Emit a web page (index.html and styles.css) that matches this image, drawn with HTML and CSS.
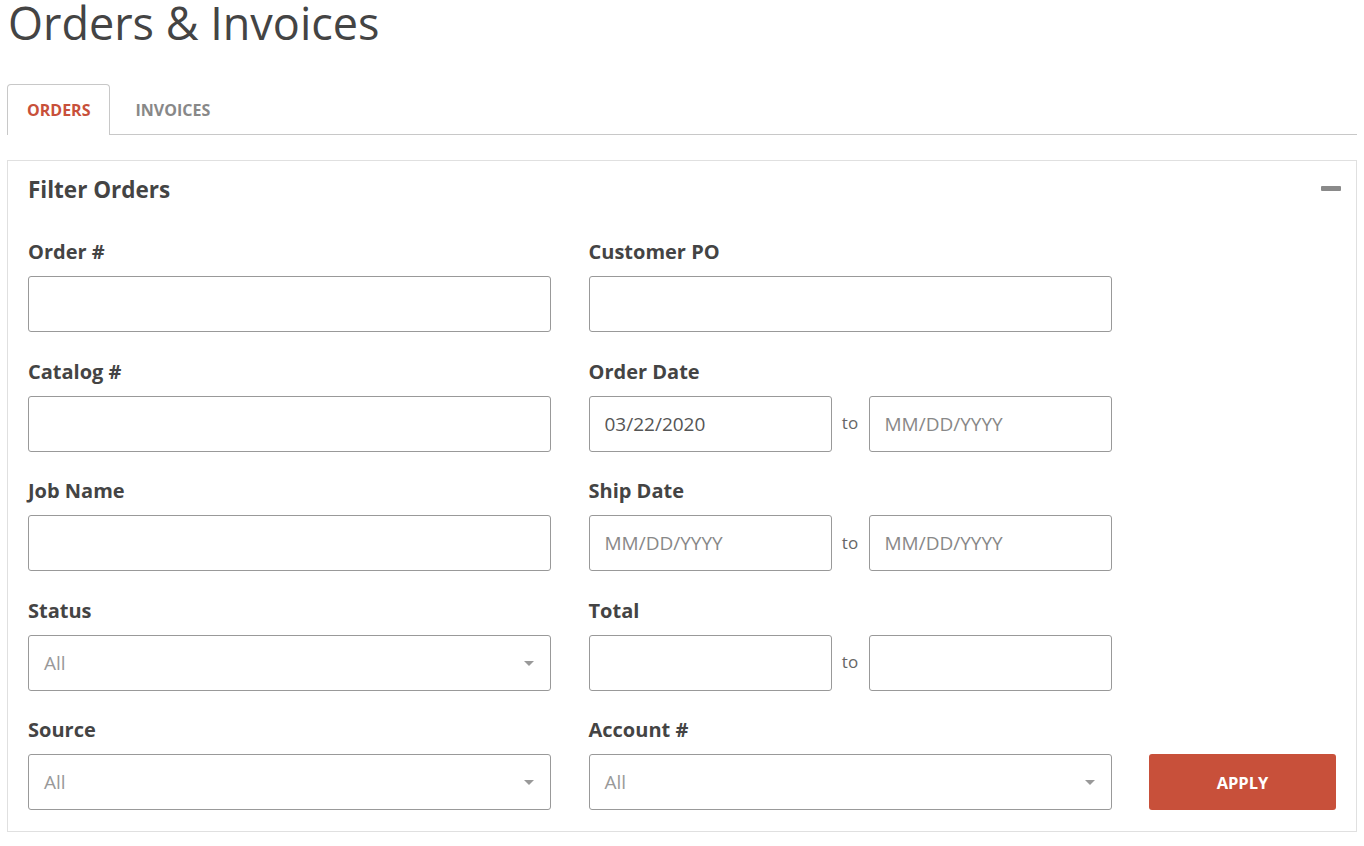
FILE: index.html
```html
<!DOCTYPE html>
<html lang="en">
<head>
    <meta charset="UTF-8">
    <meta name="viewport" content="width=device-width, initial-scale=1.0">
    <title>Orders &amp; Invoices</title>
    <link rel="stylesheet" href="styles.css">
</head>
<body>
    <h1 class="page-title">Orders &amp; Invoices</h1>

    <div class="tabs">
        <div class="tab active">Orders</div>
        <div class="tab">Invoices</div>
    </div>

    <div class="panel">
        <div class="panel-header">
            <h2>Filter Orders</h2>
            <span class="collapse-icon"></span>
        </div>

        <div class="filter-grid">
            <div class="field">
                <label>Order #</label>
                <input type="text">
            </div>
            <div class="field">
                <label>Customer PO</label>
                <input type="text">
            </div>
            <div></div>

            <div class="field">
                <label>Catalog #</label>
                <input type="text">
            </div>
            <div class="field">
                <label>Order Date</label>
                <div class="range">
                    <input type="text" value="03/22/2020">
                    <span>to</span>
                    <input type="text" placeholder="MM/DD/YYYY">
                </div>
            </div>
            <div></div>

            <div class="field">
                <label>Job Name</label>
                <input type="text">
            </div>
            <div class="field">
                <label>Ship Date</label>
                <div class="range">
                    <input type="text" placeholder="MM/DD/YYYY">
                    <span>to</span>
                    <input type="text" placeholder="MM/DD/YYYY">
                </div>
            </div>
            <div></div>

            <div class="field">
                <label>Status</label>
                <div class="select">All</div>
            </div>
            <div class="field">
                <label>Total</label>
                <div class="range">
                    <input type="text">
                    <span>to</span>
                    <input type="text">
                </div>
            </div>
            <div></div>

            <div class="field">
                <label>Source</label>
                <div class="select">All</div>
            </div>
            <div class="field">
                <label>Account #</label>
                <div class="select">All</div>
            </div>
            <div class="field apply-field">
                <button class="apply-button">Apply</button>
            </div>
        </div>
    </div>
</body>
</html>
```

FILE: styles.css
```css
body {
    margin: 0;
    padding: 0 7px;
    font-family: "Open Sans", Arial, sans-serif;
    color: #444;
    background: #fff;
}
.page-title {
    margin: 0;
    padding-left: 1px;
    font-size: 45px;
    font-weight: 400;
    line-height: 46px;
    color: #444;
}
.tabs {
    display: flex;
    margin-top: 38px;
    border-bottom: 1px solid #c8c8c8;
    height: 50px;
}
.tab {
    display: flex;
    align-items: center;
    padding: 0 19px;
    font-size: 16px;
    font-weight: 700;
    text-transform: uppercase;
    color: #888;
    border: 1px solid transparent;
    border-bottom: none;
    border-radius: 4px 4px 0 0;
    margin-bottom: -1px;
    padding-bottom: 1px;
}
.tab.active {
    color: #c8503a;
    background: #fff;
    border-color: #c8c8c8;
    margin-right: 5px;
}
.panel {
    margin-top: 25px;
    border: 1px solid #e0e0e0;
    padding: 14px 20px 21px 20px;
}
.panel-header {
    display: flex;
    align-items: center;
    justify-content: space-between;
}
.panel-header h2 {
    margin: 0;
    font-size: 22.5px;
    line-height: 30px;
    font-weight: 700;
    color: #444;
}
.collapse-icon {
    width: 20px;
    height: 5px;
    background: #8a8a8a;
    border-radius: 1px;
    margin-right: -5px;
    margin-top: -3px;
}
.filter-grid {
    display: grid;
    grid-template-columns: 523px 523px 187px;
    column-gap: 37.5px;
    row-gap: 27.5px;
    margin-top: 35px;
}
.field label {
    display: block;
    font-size: 20px;
    font-weight: 700;
    line-height: 24px;
    margin-bottom: 12px;
    color: #444;
}
.field input,
.select {
    box-sizing: border-box;
    width: 100%;
    height: 56px;
    border: 1px solid #999;
    border-radius: 3px;
    padding: 0 15px;
    font-family: "Open Sans", Arial, sans-serif;
    font-size: 19px;
    color: #555;
    background: #fff;
    outline: none;
}
.field input::placeholder {
    color: #888;
}
.range {
    display: flex;
    align-items: center;
}
.range input {
    width: 243px;
    flex: none;
}
.range span {
    flex: 1;
    text-align: center;
    font-size: 17px;
    color: #666;
    padding-bottom: 2px;
}
.select {
    position: relative;
    display: flex;
    align-items: center;
    color: #999;
}
.select::after {
    content: "";
    position: absolute;
    right: 16px;
    top: 25px;
    border-left: 5px solid transparent;
    border-right: 5px solid transparent;
    border-top: 5px solid #999;
}
.apply-field {
    display: flex;
    align-items: flex-end;
}
.apply-button {
    width: 100%;
    height: 56px;
    border: none;
    border-radius: 3px;
    background: #c8503a;
    color: #fff;
    font-family: "Open Sans", Arial, sans-serif;
    font-size: 16.5px;
    font-weight: 700;
    text-transform: uppercase;
    cursor: pointer;
}
```
